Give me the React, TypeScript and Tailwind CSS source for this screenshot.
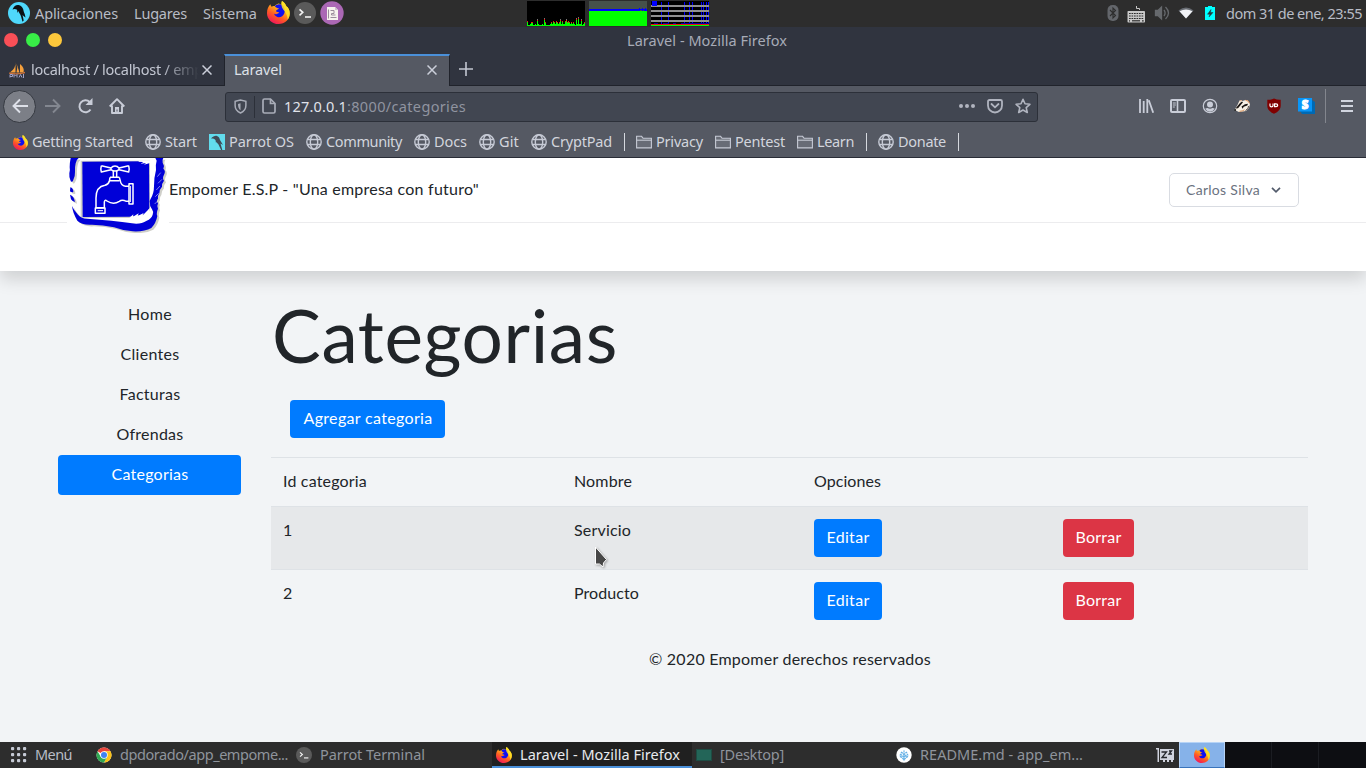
import React, { useLayoutEffect, useRef } from "react";

/* Text whose tracking is computed so that it fills exactly `w` pixels. */
function T({ w, className = "", children }: { w: number; className?: string; children: string }) {
  const ref = useRef<HTMLSpanElement>(null);
  useLayoutEffect(() => {
    const el = ref.current;
    if (!el) return;
    el.style.letterSpacing = "0px";
    const natural = el.getBoundingClientRect().width;
    el.style.letterSpacing = `${(w - natural) / children.length}px`;
  }, [w, children]);
  return (
    <span ref={ref} className={`inline-block shrink-0 whitespace-pre ${className}`}>
      {children}
    </span>
  );
}

type P = { className?: string };

const Firefox = ({ className = "" }: P) => (
  <svg viewBox="0 0 22 22" className={`shrink-0 ${className}`}>
    <defs>
      <linearGradient id="ffBody" x1="0.8" y1="0" x2="0.25" y2="1">
        <stop offset="0" stopColor="#fff02f" />
        <stop offset="0.35" stopColor="#ffb51a" />
        <stop offset="0.65" stopColor="#ff5a24" />
        <stop offset="1" stopColor="#f01060" />
      </linearGradient>
    </defs>
    <path d="M3.2 3.2c.1 1 .5 1.7 1.2 2.2 1-.7 2-.8 3-.6C8.500 3.500 9.500 3 11 2.500c1 .3 2 .7 3 1.500C13.800 2.500 13.900 1.200 14.300 0c2 1.300 3.500 3 4.200 5 1.700 1 3.300 3.600 3.300 6.800C21.800 18 17 22 11 22S0 17.400 0 11.600C0 8 1.300 5 3.200 3.200z" fill="url(#ffBody)" />
    <path d="M7.500 5c1.500-2 5-2.600 7.500-.8 2 1.600 2.600 5 1.500 7.800-1 2.600-3.500 4-6 3.500-2-.4-3.300-1.700-3.600-3.200 1 .6 2 .5 3-.1.800-.5 1.400-.4 1.900-.9-.9-1.100-2.400-.6-3.200-1.600.3-1.200 1.600-1.500 3-2.500-1.700-.2-2.800-.8-4.100-2.200z" fill="#1010f0" />
    <path d="M14.300 0c2 1.300 3.500 3 4.200 5 1.700 1 3.300 3.600 3.300 6.800 0 2.500-.8 4.500-2 6-.2-3-1-4.600-1.800-6C16.800 9 14 7 13.800 4c-.2-1.500 0-2.800.5-4z" fill="#ffe226" opacity="0.85" />
  </svg>
);

const Parrot = ({ className = "" }: P) => (
  <svg viewBox="0 0 22 22" className={`shrink-0 ${className}`}>
    <circle cx="11" cy="11" r="11" fill="#4fd8fb" />
    <path d="M4.500 7.500C6 4 8 2.700 10.500 3c2.300.3 4 2 4.700 4.300.5 2 .8 3.500 1.600 5l.7 3.200c-1.200-.8-2.300-1.700-3-2.600l1.200 5.600-1.200 1.200-1.500-5.500c-.7-2.200-2-3.300-2.700-5.200L9.500 11l-.4-3.200C7.500 6.700 6 6.700 4.500 7.500z" fill="#0a1014" />
  </svg>
);

const ParrotSquare = ({ className = "" }: P) => (
  <svg viewBox="0 0 16 16" className={`shrink-0 ${className}`}>
    <rect width="16" height="16" fill="#62dced" />
    <path d="M2 4.500C4 2.500 6 1.500 8 2c2 .7 2.600 2.200 3 4l3 5-2.500-1.500 1.800 6.500h-1.200L9.500 10.500 7.300 8 7 9 6.500 6C5 4.500 3.500 4.200 2 4.500z" fill="#404b57" />
  </svg>
);

const TermIcon = ({ className = "" }: P) => (
  <svg viewBox="0 0 22 22" className={`shrink-0 ${className}`}>
    <circle cx="11" cy="11" r="11" fill="#5a5a5a" />
    <path d="M5.500 7.300l3.300 3-3.300 3" fill="none" stroke="#f2f2f2" strokeWidth="1.600" />
    <path d="M11 15h6" stroke="#f2f2f2" strokeWidth="1.600" />
  </svg>
);

const NoteIcon = ({ className = "" }: P) => (
  <svg viewBox="0 0 24 24" className={`shrink-0 ${className}`}>
    <circle cx="12" cy="12" r="11.700" fill="#ab68b5" />
    <path d="M7 6h8l3 3v10H7z" fill="#f6f3ee" />
    <path d="M15 6v3h3" fill="#cfc4cf" />
    <path d="M8.500 8.500v9M10.500 9.500h3.500v3h-2.500v1.500h4M10.500 16.500h6" fill="none" stroke="#9a8d9b" strokeWidth="1" />
  </svg>
);

const Globe = ({ className = "" }: P) => (
  <svg viewBox="0 0 16 16" className={`size-4 shrink-0 ${className}`} fill="none" stroke="#c6cad5" strokeWidth="1.400">
    <circle cx="8" cy="8" r="7.200" />
    <ellipse cx="8" cy="8" rx="3.700" ry="7.200" />
    <path d="M1.500 5.500h13M1.500 10.500h13" />
  </svg>
);

const Folder = () => (
  <svg viewBox="0 0 16 16" className="size-4 shrink-0" fill="#686c76" stroke="#c6cad5" strokeWidth="1.100">
    <path d="M.6 13.900V2.300h5l1.500 2h8.300v9.600z" />
    <path d="M.6 6.200h14.800" />
  </svg>
);

const cpu = [4, 1, 1, 2, 3, 3, 1, 1, 2, 1, 5, 2, 1, 1, 1, 2, 1, 6, 3, 1, 1, 1, 1, 2, 3, 2, 4, 3, 2, 4, 3, 2, 3, 5, 2, 4, 2, 2, 4, 5, 3, 4, 3, 2, 3, 2, 3, 2, 1, 6, 2, 7, 2, 2, 5, 1, 2, 3];

const Monitors = () => (
  <div className="ml-[183px] flex h-[25px] gap-1">
    <svg viewBox="0 0 58 25" className="h-[25px] w-[58px]" shapeRendering="crispEdges">
      <rect width="58" height="25" fill="#000" />
      {cpu.map((v, i) => (
        <g key={i}>
          {v > 4 && <rect x={i} y={24 - v - 1} width="1" height="3" fill="#777" />}
          {v > 2 && <rect x={i} y={24 - v} width="1" height={v} fill="#f01010" />}
          <rect x={i} y={25 - v} width="1" height={v} fill="#0f0" />
        </g>
      ))}
    </svg>
    <svg viewBox="0 0 58 25" className="h-[25px] w-[58px]" shapeRendering="crispEdges">
      <rect width="58" height="25" fill="#46514b" />
      <rect y="8" width="58" height="2" fill="#00f" />
      <rect y="10" width="58" height="15" fill="#0f0" />
      <path d="M50 8h1M53 8h1M56 8h1" stroke="#00f" strokeWidth="2" />
      <path d="M51 9.500h2M54 9.500h1" stroke="#46514b" />
    </svg>
    <svg viewBox="0 0 58 25" className="h-[25px] w-[58px]" shapeRendering="crispEdges">
      <rect width="58" height="25" fill="#000" />
      <path d="M10.500 1v22M17.500 1v22M33.500 1v22M38.500 1v22M41.500 1v22M50.500 1v22M52.500 1v22M55.500 1v22M57.500 1v22" stroke="#00f" />
      <path d="M3 22.500h4M12 22.500h6M22 22.500h3M30 22.500h28" stroke="#0000a0" />
      <path d="M0 5h58M0 10h58M0 15h58M0 20h58" stroke="#909090" strokeWidth="2" />
      <rect x="1" width="5" height="5" fill="#00f" />
      <rect y="23" width="58" height="1" fill="#f01010" />
      <rect y="24" width="58" height="1" fill="#0f0" />
    </svg>
  </div>
);

function TopPanel() {
  return (
    <div className="flex h-[27px] shrink-0 items-center bg-[#2d2d2d] text-[14.5px] text-[#b8bcc5]">
      <Parrot className="-mt-[2px] ml-2 size-[22px]" />
      <T w={83} className="ml-[5px]">Aplicaciones</T>
      <T w={53} className="ml-4">Lugares</T>
      <T w={54} className="ml-4">Sistema</T>
      <Firefox className="-mt-[2px] ml-[10px] size-[23px]" />
      <TermIcon className="-mt-px ml-1 size-[22px]" />
      <NoteIcon className="-mt-px ml-1 size-6" />
      <Monitors />
      <div className="flex flex-1 items-center justify-end pr-1">
        <svg viewBox="0 0 12 16" className="-mt-px mr-2 h-4 w-3">
          <rect x=".5" width="11" height="16" rx="5" fill="#63666b" />
          <path d="M3 5l5.500 5.500L6 13V3l2.500 2.500L3 11" fill="none" stroke="#2d2d2d" strokeWidth="1.100" />
        </svg>
        <svg viewBox="0 0 18 18" className="mr-[9px] size-[18px]">
          <path d="M12.500 5V3.500h-3V1" fill="none" stroke="#c8c8c8" />
          <rect x=".5" y="6" width="17.500" height="11.500" rx=".8" fill="#c8c8c8" />
          <path d="M2 8.500h15M2 11h15M2 13.500h15M2 15.800h1M15 15.800h2" stroke="#2d2d2d" strokeWidth="1.200" strokeDasharray="1.700 .8" />
          <path d="M5 15.800h8" stroke="#2d2d2d" strokeWidth="1.200" />
        </svg>
        <svg viewBox="0 0 16 16" className="-mt-px mr-2 size-4" fill="none" stroke="#66696d" strokeWidth="1.300">
          <path d="M1.500 5.500H4L7.500 2v12L4 10.500H1.500z" fill="#66696d" />
          <path d="M10 5q2.200 3 0 6M11.500 2q6 6 0 12" />
        </svg>
        <svg viewBox="0 0 16 12" className="-mt-px mr-[11px] h-3 w-4">
          <path d="M.5 3.500Q8-2.500 15.500 3.500L8 11.500z" fill="#676b72" />
          <path d="M1.500 4.200Q8 1 14.500 4.200L8 11.500z" fill="#f1f3f6" />
        </svg>
        <svg viewBox="0 0 10 14" className="-mt-px mr-[11px] h-[14px] w-[10px]">
          <path d="M0 1h3V0h4v1h3v13H0z" fill="#00ffff" />
          <path d="M6 3.500L2.500 8.200H5L4 11l4-4.500H5.500z" fill="#24363a" stroke="#24363a" strokeWidth=".5" />
        </svg>
        <T w={136}>dom 31 de ene, 23:55</T>
      </div>
    </div>
  );
}

const Cross = ({ className = "" }: P) => (
  <svg viewBox="0 0 10 10" className={`size-[10px] shrink-0 ${className}`}>
    <path d="M.5.5l9 9M9.500.5l-9 9" stroke="#cbcfda" strokeWidth="1.500" />
  </svg>
);

function TitleAndTabs() {
  return (
    <>
      <div className="grid h-[27px] shrink-0 grid-cols-[627px_1fr] items-center bg-[#30343f] text-[14.5px] text-[#a7abb7]">
        <div className="-mt-px flex gap-2 pl-1">
          <span className="size-[14px] rounded-full bg-[#f94f57]" />
          <span className="size-[14px] rounded-full bg-[#38ed47]" />
          <span className="size-[14px] rounded-full bg-[#fdc83c]" />
        </div>
        <T w={160} className="justify-self-start">Laravel - Mozilla Firefox</T>
      </div>
      <div className="flex h-8 shrink-0 bg-[#30343f] text-[14.5px]">
        <div className="flex w-56 items-center border-b border-[#20232b] pl-[9px] text-[#c2c6d1]">
          <svg viewBox="0 0 16 16" className="size-4 shrink-0">
            <path d="M6.500 0Q7 6 1 10.500h5.500zM7.500 1.500Q9 6 7.500 10.500h3zM11 2q5 4 3.500 8.500H11z" fill="#f5a03c" />
            <path d="M0 10.500q8 2 16-.8v1.500q-8 2.200-16 .5z" fill="#c9703a" />
            <path d="M1 15.500v-3h2.500v2H1M5 15.500v-3l1.500 1.500L8 12.500v3M10 15.500l1.500-3 1.500 3M14.500 12v4" fill="none" stroke="#9d9fc4" />
          </svg>
          <T w={172} className="ml-[6px] [mask-image:linear-gradient(to_right,black_130px,transparent_168px)]">localhost / localhost / emp</T>
          <Cross className="-ml-px" />
        </div>
        <div className="flex w-[226px] items-center border-x border-t-2 border-x-[#20232b] border-t-[#4a90d9] bg-[#555963] pl-[9px] text-[#dde0e7]">
          <T w={48} className="-mt-[3px]">Laravel</T>
          <Cross className="-mt-[2px] ml-[145px]" />
        </div>
        <div className="flex flex-1 items-center border-b border-[#20232b] pl-[9px]">
          <svg viewBox="0 0 14 14" className="-mt-px size-[14px]">
            <path d="M7 0v14M0 7h14" stroke="#c2c6d1" strokeWidth="1.600" />
          </svg>
        </div>
      </div>
    </>
  );
}

function Toolbar() {
  return (
    <div className="flex h-[41px] shrink-0 items-center bg-[#555963]">
      <div className="-mt-px ml-[3px] flex size-[33px] items-center justify-center rounded-full border border-[#353941] bg-[#7c7f87]">
        <svg viewBox="0 0 16 16" className="size-4" fill="none" stroke="#dde0e8" strokeWidth="1.900">
          <path d="M16 8H1.500M8 1.500L1.500 8 8 14.500" />
        </svg>
      </div>
      <svg viewBox="0 0 16 16" className="-mt-px ml-[9px] size-4" fill="none" stroke="#838790" strokeWidth="1.900">
        <path d="M0 8h14.500M8 1.500L14.500 8 8 14.500" />
      </svg>
      <svg viewBox="0 0 16 16" className="-mt-px ml-4 size-4" fill="none" stroke="#c9cdd8" strokeWidth="2">
        <path d="M12.700 4A6 6 0 1 0 13.500 11.500" />
        <path d="M15.500 0v7H8.500z" fill="#c9cdd8" stroke="none" />
      </svg>
      <svg viewBox="0 0 16 16" className="-mt-px ml-4 size-4" fill="none" stroke="#c9cdd8" strokeWidth="1.900">
        <path d="M.7 8.500L8 1.200l7.300 7.300M3 7.500V15h10V7.500" strokeLinejoin="round" />
        <path d="M6 15V9h4v6" fill="#c9cdd8" stroke="none" />
        <path d="M8 11.500v2" stroke="#555963" strokeWidth="1" />
      </svg>
      <div className="ml-[100px] flex h-[30px] w-[813px] items-center rounded-[3px] border border-[#2c3039] bg-[#414651]">
        <svg viewBox="0 0 14 16" className="-mt-px ml-2 h-[15px] w-[13px]" fill="none" stroke="#a9adb8" strokeWidth="1.600">
          <path d="M7 1L1.200 2.500V7c0 4 2.300 6.500 5.800 8 3.500-1.500 5.800-4 5.800-8V2.500z" />
          <path d="M7 4.500v7.500C5 10.500 4.300 8.500 4.300 5.200z" fill="#a9adb8" stroke="none" />
        </svg>
        <span className="ml-[7px] h-[22px] w-px bg-[#2c3039]" />
        <svg viewBox="0 0 14 16" className="-mt-px ml-[7px] h-4 w-[14px]" fill="none" stroke="#a9adb8" strokeWidth="1.700">
          <path d="M1 2.500Q1 1 2.500 1h6L13 5.500v8Q13 15 11.500 15h-9Q1 15 1 13.500z" />
          <path d="M8.500 1v4.500H13" />
        </svg>
        <T w={63} className="ml-2 text-[14.500px] text-[#e0e3ea]">127.0.0.1</T>
        <T w={119} className="text-[14.500px] text-[#9094a0]">:8000/categories</T>
        <div className="-mt-px flex flex-1 items-center justify-end gap-3 pr-[6px]">
          <svg viewBox="0 0 16 4" className="h-1 w-4" fill="#b0b4bf">
            <circle cx="2" cy="2" r="2" /><circle cx="8" cy="2" r="2" /><circle cx="14" cy="2" r="2" />
          </svg>
          <svg viewBox="0 0 16 16" className="size-4" fill="none" stroke="#b0b4bf" strokeWidth="1.800">
            <path d="M2.500 2h11Q15 2 15 3.500V7.500A7 7 0 0 1 1 7.500V3.500Q1 2 2.500 2z" />
            <path d="M4.500 6L8 9.300 11.500 6" strokeLinecap="round" />
          </svg>
          <svg viewBox="0 0 16 16" className="size-4" fill="none" stroke="#b0b4bf" strokeWidth="1.600">
            <path d="M8 1.300l2 4.500 4.900.5-3.700 3.300 1.100 4.900L8 12l-4.300 2.500 1.100-4.900L1.100 6.300 6 5.800z" strokeLinejoin="round" />
          </svg>
        </div>
      </div>
      <div className="-mt-px flex flex-1 items-center gap-4 pl-[100px]">
        <svg viewBox="0 0 16 16" className="size-4" stroke="#c9cdd8" strokeWidth="1.800">
          <path d="M2 1v14M5.700 3v12M9.300 1v14M10.800 2.200l4.400 12.500" />
        </svg>
        <svg viewBox="0 0 16 16" className="size-4" fill="none" stroke="#c9cdd8" strokeWidth="2">
          <rect x="1" y="2" width="14" height="12" rx="1" />
          <path d="M7.500 2v12" strokeWidth="1.600" />
          <path d="M2.800 5h3M2.800 7h3M2.800 9h2" strokeWidth="1" />
        </svg>
        <svg viewBox="0 0 16 16" className="size-4" fill="none" stroke="#c9cdd8" strokeWidth="1.200">
          <circle cx="8" cy="8" r="6.700" />
          <circle cx="8" cy="6.400" r="3" fill="#c9cdd8" stroke="none" />
          <path d="M3.200 10.800q1.500-1 2.300-.8 2.500 1.300 5 0 .8-.2 2.300.8-1.800 2.900-4.800 2.900t-4.800-2.900z" fill="#c9cdd8" stroke="none" />
        </svg>
        <svg viewBox="0 0 17 16" className="-mx-px h-4 w-[18px]">
          <path d="M1 12L4 7 6 2.500l2-.5 1 1 3-1 2.500.5L16.500 6l-1 4-3 3-3 .5-4 .5z" fill="#f6efe4" />
          <path d="M2 10.500L6.500 5l2-1.500 1 .8-2.500 3-2.500 3zM8 8.500l3.500-2.300 3-.4-.7 1.700-3.500 1.200-1.300 2z" fill="#191412" />
          <path d="M6.500 3.500L8 2M12 2.300l2.500.7 1.500 2.500" fill="none" stroke="#e0955c" strokeWidth="1" />
          <path d="M12 12.500l2.500-2 .5-2.500" fill="none" stroke="#554a44" />
          <circle cx="1.700" cy="12" r="1" fill="#222" />
          <path d="M6 13.300q3 0 5-1.500" fill="none" stroke="#d5823f" strokeWidth=".8" />
        </svg>
        <svg viewBox="0 0 16 16" className="size-4">
          <path d="M8 .5Q5 2 1.300 1.800V8q0 5 6.700 7.700Q14.700 13 14.700 8V1.800Q11 2 8 .5z" fill="#800000" />
          <path d="M4 5.500v2.300q0 1 1.500 1t1.500-1V5.500M8.600 5.900h1.400q1.700 0 1.700 1.300T10 8.600H8.600z" fill="none" stroke="#fff" strokeWidth="1.200" />
        </svg>
        <svg viewBox="0 0 17 16" className="h-4 w-[17px]">
          <path d="M2 13h12V2l3 2v12H4z" fill="#0069b3" />
          <rect width="14" height="13.500" fill="#0996f8" />
          <text x="7" y="11" textAnchor="middle" fontFamily="Noto Sans, sans-serif" fontSize="11.500" fontWeight="900" stroke="#fff" strokeWidth="1" fill="#fff">S</text>
        </svg>
        <span className="-ml-[6px] h-[34px] w-px bg-[#83868e]" />
        <svg viewBox="0 0 12 12" className="-ml-px size-3" stroke="#d0d4de" strokeWidth="2">
          <path d="M0 1h12M0 6h12M0 11h12" />
        </svg>
      </div>
    </div>
  );
}

const Mark = ({ icon, w, text }: { icon: React.ReactNode; w: number; text: string }) => (
  <div className="flex items-center gap-1">
    {icon}
    <T w={w}>{text}</T>
  </div>
);
const Sep = () => <span className="-mr-px h-[18px] w-px bg-[#d5d8de]" />;

function Bookmarks() {
  return (
    <div className="flex h-[31px] shrink-0 items-center gap-3 border-b border-[#292c36] bg-[#555963] pl-3 text-[14.500px] text-[#d2d5dd]">
      <Mark icon={<Firefox className="ml-px size-[15px]" />} w={101} text="Getting Started" />
      <Mark icon={<Globe />} w={32} text="Start" />
      <Mark icon={<ParrotSquare className="size-4" />} w={65} text="Parrot OS" />
      <Mark icon={<Globe />} w={76} text="Community" />
      <Mark icon={<Globe />} w={33} text="Docs" />
      <Mark icon={<Globe />} w={20} text="Git" />
      <Mark icon={<Globe />} w={61} text="CryptPad" />
      <Sep />
      <Mark icon={<Folder />} w={47} text="Privacy" />
      <Mark icon={<Folder />} w={50} text="Pentest" />
      <Mark icon={<Folder />} w={37} text="Learn" />
      <Sep />
      <Mark icon={<Globe />} w={48} text="Donate" />
      <Sep />
    </div>
  );
}

const frame =
  "M32 12h24q-8 6-9 16-3 12-2 26 1 14-6 26-5 8-8-2-4-8-3-20 3-8 1-18 0-14 3-28z" +
  "M31 100q9 2 9 14-6 2-10-2zM30 122q12 4 15 22-8-2-12-8z" +
  "M36 156q6 14 18 26 10 12 28 12l72 6q34 4 62 8 26 4 44-8 14-6 18-18 4-8-2-16-8-8-6-18-4-6 2-14 10-16 10-38 0-26 6-48-2-16 2-28l-4-8h24q-4 6-2 14 6 8 2 18 8 6 2 18-6 10 0 18-8 10-6 18-8 8-8 20-6 8-4 16-6 6 0 14-4 8 0 16-6 14-2 22-4 22-18 36-22 12-56 10-30-2-56-12-34-8-66-8-30 2-44-12-14-24-16-44z";

const FaucetLogo = () => (
  <svg viewBox="21 12 306 225" className="h-[75px] w-[102px] shrink-0">
    <rect x="21" y="12" width="306" height="225" fill="#fff" />
    <path d={frame} fill="#cfcfc9" transform="translate(6 5)" />
    <path d="M62 20h208v150l-14 14-10 8H62z" fill="#cfcfc9" />
    <path d={frame} fill="#0000d8" />
    <path d="M67 23l200-1 1 140q-6 18-20 21l-40 5-140 1z" fill="#0000d8" />
    <path d="M236 23l14 1-8 5 16-2-6 5 18-5V20h-34zM208 192l12-11-1 7 17-10-3 8 18-9-4 8 22-22v29z" fill="#fff" />
    <path d="M302 56l-10 12M306 76l-12 12M300 96l-11 12M296 118l-10 10M294 140l-10 10" stroke="#fff" strokeWidth="1.500" />
    <g fill="none" stroke="#fff" strokeWidth="4.500" strokeLinejoin="round">
      <path d="M124 35q-3 9 0 19l29-7M124 35l29 7M206 35q3 9 0 19l-29-7M206 35l-29 7" />
      <path d="M153 42q5-6 12-6t12 6v5q-5 4-12 4t-12-4z" />
      <path d="M160 50v18M170 50v18M150 70h28M150 70l-2 12q-3 10-13 12-27 4-27 38v29h25v-17q1-8 8-3 19 13 37 1 8-6 21 0h8v8h12V89h-12v8h-11q-13-3-15-16l-3-11M150 80h28" />
      <path d="M106 162h29v16h-29zM207 98v44" />
    </g>
    <path d="M113 170h16M211 96v48" stroke="#fff" strokeWidth="3" />
  </svg>
);

const side: [string, number][] = [["Home", 44], ["Clientes", 59], ["Facturas", 61], ["Ofrendas", 67], ["Categorias", 77]];

function SideNav() {
  return (
    <nav className="w-[183px] pt-6">
      {side.map(([label, w]) => (
        <a
          key={label}
          className={
            label === "Categorias"
              ? "flex h-10 items-center justify-center rounded bg-[#007bff] pb-[2px] pl-px text-white"
              : "flex h-10 items-center justify-center pb-[2px] pl-px"
          }
        >
          <T w={w}>{label}</T>
        </a>
      ))}
    </nav>
  );
}

const Btn = ({ className, w, children }: { className: string; w: number; children: string }) => (
  <button className={`flex h-[38px] items-center justify-center rounded pb-[2px] text-white ${className}`}>
    <T w={w}>{children}</T>
  </button>
);

const rows: [string, string, number][] = [["1", "Servicio", 57], ["2", "Producto", 65]];

function Categories() {
  return (
    <section className="ml-[30px] w-[1037px]">
      <h1 className="mt-[15px] h-[101px] pl-px text-[73px] leading-[98px]">
        <T w={346}>Categorias</T>
      </h1>
      <Btn w={129} className="mt-[13px] ml-[19px] w-[155px] bg-[#007bff] pl-px">Agregar categoria</Btn>
      <div className="mt-[19px]">
        <div className="grid h-[49px] grid-cols-[291px_240px_249px_257px] items-center border-t border-[#dee2e6] pb-[2px]">
          <div className="pl-3"><T w={84}>Id categoria</T></div>
          <div className="pl-3"><T w={58}>Nombre</T></div>
          <div className="pl-3"><T w={67}>Opciones</T></div>
        </div>
        {rows.map(([id, name, w], i) => (
          <div
            key={id}
            className={`grid h-[63px] grid-cols-[291px_240px_249px_257px] items-start border-t border-[#dee2e6] pt-3 ${i === 0 ? "bg-[#e6e8ea]" : ""}`}
          >
            <div className="-mt-px pl-3">{id}</div>
            <div className="-mt-px pl-3"><T w={w}>{name}</T></div>
            <div className="pl-3"><Btn w={43} className="w-[68px] bg-[#007bff]">Editar</Btn></div>
            <div className="pl-3"><Btn w={46} className="w-[71px] bg-[#dc3545]">Borrar</Btn></div>
          </div>
        ))}
      </div>
    </section>
  );
}

function Page() {
  return (
    <main className="relative flex h-[584px] shrink-0 flex-col overflow-hidden bg-[#f2f4f6] font-[Lato,sans-serif] text-base text-[#212529]">
      <header className="h-[113px] shrink-0 bg-white shadow-[0_8px_16px_rgba(0,0,0,0.15)]">
        <div className="flex h-[65px] items-start border-b border-[#ececee] pl-[67px]">
          <FaucetLogo />
          <T w={310} className="mt-[19px]">Empomer E.S.P - "Una empresa con futuro"</T>
          <button className="mt-[15px] ml-auto mr-[67px] flex h-[34px] w-[130px] items-center rounded-[5px] border border-[#d9dce2] pl-4 text-sm text-[#6b7280]">
            <T w={74}>Carlos Silva</T>
            <svg viewBox="0 0 10 6" className="ml-[11px] h-[6px] w-[10px]" fill="none" stroke="#525b6b" strokeWidth="1.700">
              <path d="M1 .8l4 4 4-4" />
            </svg>
          </button>
        </div>
      </header>
      <div className="flex pl-[58px]">
        <SideNav />
        <Categories />
      </div>
      <footer className="mt-[15px] pl-[649px]"><T w={282}>© 2020 Empomer derechos reservados</T></footer>
      <svg viewBox="0 0 14 24" className="absolute top-[388px] left-[594px] h-6 w-[14px] drop-shadow-[1px_1px_1px_rgba(0,0,0,0.3)]">
        <path d="M1.500 1v17h4l3.500 3 .5-4 3-3.500z" fill="#474747" stroke="#fff" strokeWidth="1" />
      </svg>
    </main>
  );
}

function Taskbar() {
  return (
    <div className="flex h-[26px] shrink-0 items-center bg-[#2d2d2d] text-[14.500px] text-[#8f949c]">
      <svg viewBox="0 0 16 16" className="ml-[11px] size-4 shrink-0" fill="#c6cad5">
        {[0, 6, 12].map((x) => [0, 6, 12].map((y) => <rect key={`${x}-${y}`} x={x} y={y} width="3.200" height="3.200" rx="1" />))}
      </svg>
      <T w={37} className="ml-2 text-[#b8bcc5]">Menú</T>
      <svg viewBox="0 0 16 16" className="ml-6 size-4 shrink-0">
        <circle cx="8" cy="8" r="7.500" fill="#fff" />
        <path d="M8 8L1.500 4.250A7.500 7.500 0 0 1 14.500 4.250H8z" fill="#e8453c" />
        <path d="M14.500 4.250A7.500 7.500 0 0 1 8 15.500L11.200 9.800 8 4.250z" fill="#fbc116" />
        <path d="M1.500 4.250A7.500 7.500 0 0 0 8 15.500l3.200-5.700H4.800z" fill="#31a852" />
        <circle cx="8" cy="8" r="3.700" fill="#fff" />
        <circle cx="8" cy="8" r="3" fill="#3e82f1" />
      </svg>
      <T w={168} className="ml-2">dpdorado/app_empome...</T>
      <TermIcon className="ml-2 size-4" />
      <T w={105} className="ml-2">Parrot Terminal</T>
      <div className="ml-[67px] flex h-full w-[200px] items-center border-b-2 border-[#4a90d9] bg-[#202020] pt-[2px] pl-1 text-[#e8eaee]">
        <Firefox className="size-4" />
        <T w={160} className="ml-2">Laravel - Mozilla Firefox</T>
      </div>
      <svg viewBox="0 0 16 12" className="ml-1 h-3 w-4 shrink-0">
        <rect width="16" height="12" fill="#1d4c43" />
        <rect x="1" y="1" width="14" height="10" fill="#236558" />
      </svg>
      <T w={64} className="ml-2">[Desktop]</T>
      <svg viewBox="0 0 16 16" className="ml-28 size-4 shrink-0">
        <circle cx="8" cy="8" r="7.700" fill="#fff" />
        <path d="M8 13.500V3.500M8 12.500L3.500 8.500M8 12.500l4.500-4M5 5l3 2.500L11 5M4 7l4 3 4-3" stroke="#65b1e6" strokeWidth="1.500" fill="none" strokeDasharray="2.200 .7" />
      </svg>
      <T w={163} className="ml-2">README.md - app_em...</T>
      <svg viewBox="0 0 18 16" className="ml-[73px] h-4 w-[18px] shrink-0">
        <path d="M0 1h3v14H1.500V2.500H0zM4 2h14v11h-1v2h-2v-2h-2v2h-2v-2H9v2H7v-2H4z" fill="#d0d3de" />
        <path d="M5.500 5h5L6 10.500h5M13 4h2.500L13 7h3" fill="none" stroke="#24262c" strokeWidth="1.300" />
      </svg>
      <div className="ml-[5px] flex h-full w-[46px] items-center justify-center border border-[#b6d3f6] border-b-[#3973bb] bg-[#86b2e9]">
        <Firefox className="size-4" />
      </div>
      <div className="grid h-full flex-1 grid-cols-3 divide-x divide-[#1b1d22] bg-[#0d0e12]">
        <span /><span /><span />
      </div>
    </div>
  );
}

export default function App() {
  return (
    <div className="flex h-[768px] w-[1366px] flex-col overflow-hidden font-['Noto_Sans',sans-serif]">
      <TopPanel />
      <TitleAndTabs />
      <Toolbar />
      <Bookmarks />
      <Page />
      <Taskbar />
    </div>
  );
}
